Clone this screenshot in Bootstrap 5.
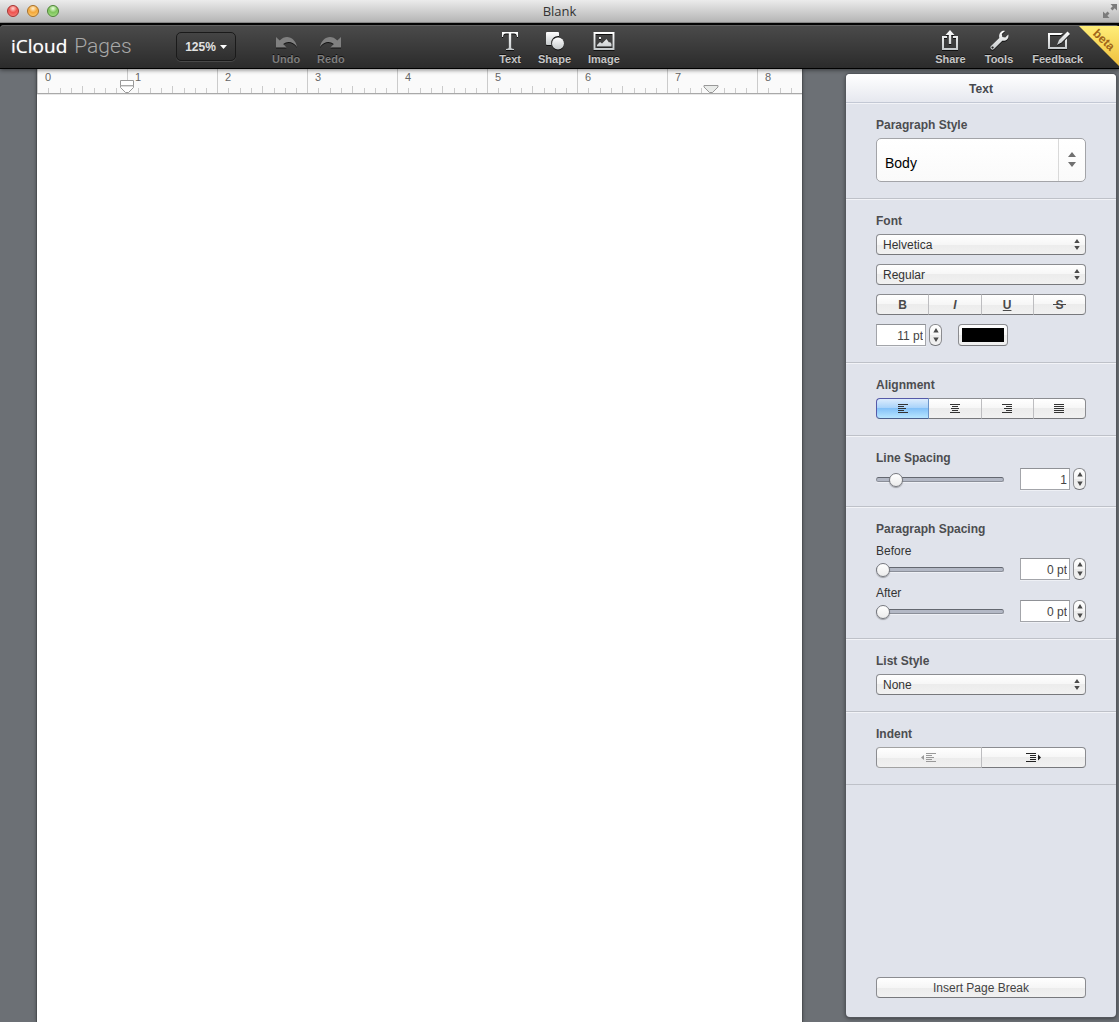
<!DOCTYPE html>
<html lang="en">
<head>
<meta charset="utf-8">
<meta name="viewport" content="width=device-width, initial-scale=1">
<title>Blank</title>
<link rel="stylesheet" href="https://cdn.jsdelivr.net/npm/bootstrap@5.3.0/dist/css/bootstrap.min.css">
<style>
:root { --ui: "Liberation Sans", Arial, Helvetica, sans-serif; --edge: #8b8c90; }
body { font-family: var(--ui); font-size: 12px; line-height: 16px; color: #333; background: #6c7075; }
svg { display: block; }

/* window title bar */
.win-title { height: 25px; background: linear-gradient(#ececec, #b2b2b2); border-bottom: 2px solid #050505; padding-bottom: 2px; font-family: "Open Sans", "Noto Sans", sans-serif; font-size: 13px; color: #333; box-shadow: inset 0 -1px #8c8c8c; }
.win-side { flex: 1 1 0; min-width: 0; }
.win-dots { padding-left: 7px; }
.win-full { margin-right: 2px; }
.dot { width: 12px; height: 12px; border-radius: 50%; border: 1px solid; padding: 0; }
.dot-red { background: radial-gradient(circle at 50% 25%, #ffd5d0 0, #ee5450 45%, #f4716c 75%, #ffa59b); border-color: #a53230; }
.dot-amber { background: radial-gradient(circle at 50% 25%, #fff0d0 0, #f3a83c 45%, #fbc05e 75%, #ffe28f); border-color: #a97026; }
.dot-green { background: radial-gradient(circle at 50% 25%, #ecffdf 0, #7fc45c 45%, #98d877 75%, #c9f7a2); border-color: #4e8438; }

/* toolbar */
.tools { height: 44px; background: linear-gradient(#4b4b4b, #2b2b2b); border-bottom: 1px solid #000; border-radius: 4px 4px 0 0; box-shadow: inset 0 1px #626262, 0 1px 4px rgba(0,0,0,.5); position: relative; z-index: 2; }
.tools-wrap { background: #000; }
.tool-side { flex: 1 1 0; min-width: 0; }
.brand { font-family: "Open Sans", "Noto Sans", sans-serif; font-size: 19px; line-height: 24px; color: #fff; width: 176px; padding: 0 0 2px 11px; text-decoration: none; white-space: nowrap; text-shadow: 0 0 1px rgba(255,255,255,.6); }
.brand-thin { font-family: Roboto, "Liberation Sans", sans-serif; font-weight: 300; font-size: 21px; color: #a8a8a8; margin-left: 7px; text-shadow: none; }
.zoom-btn { width: 60px; height: 29px; padding: 0; border: 1px solid #1a1a1a; border-radius: 5px; background: linear-gradient(#454545, #2e2e2e); color: #e2e2e2; font-weight: bold; font-size: 12px; line-height: 16px; gap: 4px; box-shadow: 0 1px rgba(255,255,255,.12); margin-right: 36px; }
.zoom-btn:hover { background: #3c3c3c; color: #fff; }
.tool-set { gap: 17px; }
.tool-btn { border: 0; background: none; padding: 0; color: #c6c6c6; font-weight: bold; font-size: 11px; line-height: 14px; text-shadow: 0 -1px #111; align-self: flex-start; }
.tool-btn svg { height: 22px; margin: 4px auto 1px; filter: drop-shadow(0 1px 0 #111); }
.tool-btn:disabled { color: #7d7d7d; }
.tools-end { gap: 19px; margin-right: 36px; }
.ribbon { position: absolute; top: 1px; right: 0; overflow: visible; }

/* document */
.work { min-height: 0; }
.canvas { padding: 0 44px 0 37px; min-width: 0; }
.sheet { background: #fff; box-shadow: 0 0 0 1px #4c4f53, 0 0 4px rgba(0,0,0,.5); }
.ruler { height: 26px; background: #fafafa; border-bottom: 1px solid #e8e8e8; box-shadow: inset 0 -1px #a9a9a9; overflow: hidden; position: relative; }
.inch { flex: 0 0 90px; height: 25px; position: relative; }
.inch-no { position: absolute; left: 8px; top: 1px; font-size: 11px; line-height: 14px; color: #666; }
.marker { position: absolute; bottom: 0; }
.marker-left { left: 82px; }
.marker-right { left: 666px; }

/* inspector */
.inspector { width: 270px; margin: 5px 3px 5px 0; border-radius: 4px; background: #e0e3eb; box-shadow: 0 0 0 1px #55585d, 0 1px 4px rgba(0,0,0,.6); }
.insp-head { height: 29px; border-bottom: 1px solid #c3c8d4; background: linear-gradient(#fff, #e6e8ef); border-radius: 4px 4px 0 0; font-size: 12px; line-height: 30px; font-weight: bold; color: #46484e; text-align: center; margin: 0; }
.sect { padding: 14px 30px 16px; border-bottom: 1px solid #bec1c8; box-shadow: inset 0 1px #f2f3f7; }
.sect-name { display: block; font-size: 12px; line-height: 16px; font-weight: bold; color: #4c4d50; margin: 0 0 5px; }
.sect-tight { margin-bottom: 2px; }
.sub-name { display: block; line-height: 16px; margin: 6px 0 -1px; }
.sub-next { margin-top: 5px; }
.stack { display: grid; gap: 9px; }
.face { border: 1px solid var(--edge); border-bottom-color: #77787c; border-radius: 4px; background-color: #f4f4f4; background-image: linear-gradient(#fff, #f6f6f6 50%, #ececec 50%, #f1f1f1); color: #333; }
.pick { position: relative; }
.pick .form-select { height: 21px; padding: 1px 20px 0 6px; font-size: 12px; line-height: 18px; border: 1px solid var(--edge); border-bottom-color: #77787c; border-radius: 4px; background: linear-gradient(#fff, #f6f6f6 50%, #ececec 50%, #f1f1f1); color: #333; }
.pick svg { position: absolute; right: 6px; top: 5px; pointer-events: none; }
.pick-big .form-select { height: 44px; padding: 6px 36px 0 8px; font-size: 14px; line-height: 36px; background: linear-gradient(#fff, #fafafa); color: #000; border-color: #a3a4a8; border-radius: 5px; }
.pick-big svg { right: 0; top: 1px; }
.seg .btn { flex: 1 1 0; height: 21px; padding: 1px 0 0; font-size: 12px; line-height: 18px; font-weight: bold; color: #4a4a4a; border-radius: 4px; border-left-color: #bdbdc0; }
.seg .btn:first-child { border-left-color: var(--edge); }
.seg .btn:not(:last-child) { border-right-color: #bdbdc0; }
.seg .btn svg { margin: 0 auto; }
.seg-icons .btn { padding: 0; }
.seg .btn.active { color: #333; background: linear-gradient(#dcecfd, #a5d1fa 50%, #84c1f8 50%, #b8e6ff); border-color: #5559a8 #6a93c8 #4a5f8c #5559a8; }
.seg .btn:disabled { opacity: 1; color: #a2a2a2; }
.num { width: 50px; height: 22px; padding: 1px 2px 0; border: 1px solid #a3a5aa; border-top-color: #8f9196; border-radius: 0; background: #fff; text-align: right; font-size: 12px; color: #444; box-shadow: 0 1px #eef0f5; }
.step { width: 13px; height: 22px; padding: 0; border-radius: 6px; margin-left: 3px; }
.step svg { margin: 0 auto; }
.swatch { width: 50px; height: 22px; padding: 3px; margin-left: 16px; }
.swatch::-webkit-color-swatch-wrapper { padding: 0; }
.swatch::-webkit-color-swatch { border: 0; border-radius: 0; }
.slide { -webkit-appearance: none; appearance: none; flex: 1 1 0; min-width: 0; height: 22px; margin: 0 16px 0 0; background: none; }
.slide::-webkit-slider-runnable-track { height: 5px; border-radius: 3px; border: 1px solid #8b8f99; border-top-color: #646870; background: #b3b8c5; box-shadow: 0 1px #eef0f5; }
.slide::-webkit-slider-thumb { -webkit-appearance: none; width: 14px; height: 14px; margin: -5px 0 0 -1px; border-radius: 50%; border: 1px solid #77797f; background: linear-gradient(#fff, #ececec); box-shadow: 0 1px 1px rgba(0,0,0,.3); }
.insp-foot { padding: 0 30px 19px; }
.wide-btn { height: 21px; padding: 1px 0 0; font-size: 12px; line-height: 18px; color: #444; }
</style>
</head>
<body class="vh-100 d-flex flex-column overflow-hidden">

<svg width="0" height="0" class="position-absolute" aria-hidden="true">
  <defs>
    <linearGradient id="silver" x1="0" y1="0" x2="0" y2="1"><stop offset="0" stop-color="#fff"/><stop offset="1" stop-color="#c4c8ca"/></linearGradient>
    <symbol id="ticks" viewBox="0 0 90 25"><path fill="#cbcbcb" d="M0 0h1v24H0zM11 19h1v5h-1zM23 19h1v5h-1zM34 19h1v5h-1zM45 17h1v7h-1zM57 19h1v5h-1zM68 19h1v5h-1zM79 19h1v5h-1z"/></symbol>
    <symbol id="updown" viewBox="0 0 6 11"><path fill="#4a4a4a" d="M3 0 5.700 4H.3zM3 11 .3 7h5.400z"/></symbol>
    <symbol id="nudge" viewBox="0 0 6 14"><path fill="#4a4a4a" d="M3 0 5.700 4.500H.3zM3 14 .3 9.500h5.400z"/></symbol>
  </defs>
</svg>

<header class="win-title d-flex align-items-center flex-shrink-0">
  <div class="win-side d-flex">
    <div class="win-dots d-flex gap-2">
      <button class="dot dot-red" aria-label="Close"></button>
      <button class="dot dot-amber" aria-label="Minimise"></button>
      <button class="dot dot-green" aria-label="Zoom"></button>
    </div>
  </div>
  <div>Blank</div>
  <div class="win-side d-flex justify-content-end">
    <svg class="win-full" width="14" height="14" viewBox="0 0 14 14" fill="#7b7b7b"><path d="M7.500 0H14v6.500l-2.300-2.200-2.200 2.200-2-2 2.200-2.200zM0 14V7.500l2.300 2.200 2.200-2.200 2 2-2.200 2.200L6.500 14z"/></svg>
  </div>
</header>

<div class="tools-wrap flex-shrink-0">
<nav class="tools d-flex" aria-label="Toolbar">
  <div class="tool-side d-flex align-items-center">
    <a class="brand" href="#">iCloud<span class="brand-thin">Pages</span></a>
    <button class="btn zoom-btn d-flex align-items-center justify-content-center">125%
      <svg width="7" height="4" viewBox="0 0 7 4"><path d="M0 0h7L3.500 4z" fill="#fff"/></svg>
    </button>
    <div class="d-flex tool-set align-self-start">
      <button class="tool-btn" disabled><svg width="24" height="22" viewBox="0 0 24 22"><path fill="#808080" d="M2 8v10.500h10.500L9.200 15c4.300-3.500 10-2.500 13.800 3C21.500 9 12.500 4.500 5.700 11.500z"/></svg>Undo</button>
      <button class="tool-btn" disabled><svg width="24" height="22" viewBox="0 0 24 22"><path fill="#808080" d="M22 8v10.500H11.500l3.300-3.500c-4.300-3.500-10-2.500-13.800 3C2.500 9 11.500 4.500 18.300 11.500z"/></svg>Redo</button>
    </div>
  </div>
  <div class="d-flex tool-set">
    <button class="tool-btn"><svg width="18" height="22" viewBox="0 0 18 22"><path fill="url(#silver)" d="M1 3h16v5h-1c-.4-2.500-1-3.400-3-3.400h-2.800V18c0 1.400.6 1.900 2.800 2v1H5v-1c2.200-.1 2.800-.6 2.800-2V4.600H5C3 4.600 2.400 5.500 2 8H1z"/></svg>Text</button>
    <button class="tool-btn"><svg width="20" height="22" viewBox="0 0 20 22"><path fill="url(#silver)" d="M2 3h11a1 1 0 0 1 1 1v3A7.200 7.200 0 0 0 6.300 16H2a1 1 0 0 1-1-1V4a1 1 0 0 1 1-1z"/><circle cx="13" cy="14.500" r="6" fill="url(#silver)"/></svg>Shape</button>
    <button class="tool-btn"><svg width="22" height="22" viewBox="0 0 22 22"><path fill="url(#silver)" fill-rule="evenodd" d="M.5 3h21v18H.5zM2.500 5v14h17V5zM4 17.500V16l3-3 2 1.500L13.500 10l2.500 3.500 1-.5 1.500 2v2.500zM6 8h2v2H6z"/></svg>Image</button>
  </div>
  <div class="tool-side d-flex justify-content-end">
    <div class="tools-end d-flex">
    <button class="tool-btn"><svg width="18" height="22" viewBox="0 0 18 22"><path fill="url(#silver)" d="M9 1l4.500 5h-3.300v9H7.800V6H4.500zM1 7h5v2H3v10h12V9h-3V7h5v14H1z"/></svg>Share</button>
    <button class="tool-btn"><svg width="20" height="22" viewBox="0 0 20 22"><path fill="url(#silver)" fill-rule="evenodd" d="M16 2 12.800 5.100l.5 3 3 .5L19.300 5.500c1 4-2 7-6 6.200L5 20c-2 2-5-.8-3-3l8.300-8C9.300 5 12.300 1 16 2zM3.500 17.500a1 1 0 1 0 .1 0z"/></svg>Tools</button>
    <button class="tool-btn"><svg width="24" height="22" viewBox="0 0 24 22"><path fill="url(#silver)" d="M2 4h15l-2 2H4v12h15v-6.500l2-2V20H2z"/><path fill="url(#silver)" d="M21.500 2.500 24 5 15.500 13.500 11 16 13 11z"/></svg>Feedback</button>
    </div>
  </div>
  <svg class="ribbon" width="40" height="40" viewBox="0 0 40 40"><defs><linearGradient id="gold" x1="0" y1="0" x2="0" y2="1"><stop offset="0" stop-color="#ffee78"/><stop offset="1" stop-color="#efbf3c"/></linearGradient></defs><path fill="url(#gold)" d="M0 0h40v40z"/><text x="25" y="18" transform="rotate(44 25 14)" text-anchor="middle" font-family="Liberation Sans, Arial, sans-serif" font-size="12" font-weight="bold" fill="#a0651a">beta</text></svg>
</nav>
</div>

<div class="work d-flex flex-grow-1">
  <main class="canvas flex-grow-1 d-flex">
    <div class="sheet flex-grow-1 overflow-hidden">
      <div class="ruler d-flex">
        <div class="inch"><svg width="90" height="25"><use href="#ticks"/></svg><span class="inch-no">0</span></div>
        <div class="inch"><svg width="90" height="25"><use href="#ticks"/></svg><span class="inch-no">1</span></div>
        <div class="inch"><svg width="90" height="25"><use href="#ticks"/></svg><span class="inch-no">2</span></div>
        <div class="inch"><svg width="90" height="25"><use href="#ticks"/></svg><span class="inch-no">3</span></div>
        <div class="inch"><svg width="90" height="25"><use href="#ticks"/></svg><span class="inch-no">4</span></div>
        <div class="inch"><svg width="90" height="25"><use href="#ticks"/></svg><span class="inch-no">5</span></div>
        <div class="inch"><svg width="90" height="25"><use href="#ticks"/></svg><span class="inch-no">6</span></div>
        <div class="inch"><svg width="90" height="25"><use href="#ticks"/></svg><span class="inch-no">7</span></div>
        <div class="inch"><svg width="90" height="25"><use href="#ticks"/></svg><span class="inch-no">8</span></div>
        <svg class="marker marker-left" width="16" height="14" viewBox="0 0 16 14"><path fill="#fff" stroke="#999" d="M1.500.5h13v7L9.500 12.500h-3L1.500 7.500z"/><path fill="#ddd" d="M2 5h12v2H2z"/><path stroke="#aaa" d="M1.500 5.500h13"/></svg>
        <svg class="marker marker-right" width="16" height="9" viewBox="0 0 16 9"><path fill="#e9ebe9" stroke="#999" d="M1 .5h14v1.500L9.500 7.500h-3L1 2z"/></svg>
      </div>
    </div>
  </main>

  <aside class="inspector d-flex flex-column flex-shrink-0">
    <h2 class="insp-head">Text</h2>

    <section class="sect">
      <label class="sect-name" for="pstyle">Paragraph Style</label>
      <div class="pick pick-big"><select class="form-select" id="pstyle"><option>Body</option></select>
        <svg width="28" height="42" viewBox="0 0 28 42"><path d="M.5 0v42" stroke="#d9d9d9"/><path fill="#707070" d="M14 13l4 5h-8zM14 28l4-5h-8z"/></svg></div>
    </section>

    <section class="sect">
      <label class="sect-name" for="family">Font</label>
      <div class="stack">
        <div class="pick"><select class="form-select" id="family"><option>Helvetica</option></select><svg width="6" height="11"><use href="#updown"/></svg></div>
        <div class="pick"><select class="form-select" aria-label="Typeface"><option>Regular</option></select><svg width="6" height="11"><use href="#updown"/></svg></div>
        <div class="seg btn-group d-flex" role="group" aria-label="Text style">
          <button class="btn face">B</button>
          <button class="btn face fst-italic">I</button>
          <button class="btn face text-decoration-underline">U</button>
          <button class="btn face"><svg width="13" height="18" viewBox="0 0 13 18"><text x="6.500" y="13" text-anchor="middle" font-size="12" fill="#4a4a4a">S</text><path d="M0 8.500h13" stroke="#4a4a4a"/></svg></button>
        </div>
        <div class="d-flex">
          <input class="num" type="text" value="11 pt" aria-label="Font size">
          <button class="step face" aria-label="Change font size"><svg width="6" height="14"><use href="#nudge"/></svg></button>
          <input class="swatch face" type="color" value="#000000" aria-label="Text colour">
        </div>
      </div>
    </section>

    <section class="sect">
      <span class="sect-name">Alignment</span>
      <div class="seg seg-icons btn-group d-flex" role="group" aria-label="Alignment">
        <button class="btn face active" aria-label="Left"><svg width="10" height="9" viewBox="0 0 10 9"><path stroke="#333" d="M0 .5h10M0 2.500h6M0 4.500h8M0 6.500h6M0 8.500h10"/></svg></button>
        <button class="btn face" aria-label="Centre"><svg width="10" height="9" viewBox="0 0 10 9"><path stroke="#333" d="M0 .5h10M2 2.500h6M1 4.500h8M2 6.500h6M0 8.500h10"/></svg></button>
        <button class="btn face" aria-label="Right"><svg width="10" height="9" viewBox="0 0 10 9"><path stroke="#333" d="M0 .5h10M4 2.500h6M2 4.500h8M4 6.500h6M0 8.500h10"/></svg></button>
        <button class="btn face" aria-label="Justify"><svg width="10" height="9" viewBox="0 0 10 9"><path stroke="#333" d="M0 .5h10M0 2.500h10M0 4.500h10M0 6.500h10M0 8.500h10"/></svg></button>
      </div>
    </section>

    <section class="sect">
      <label class="sect-name sect-tight" for="line">Line Spacing</label>
      <div class="d-flex">
        <input class="slide" type="range" id="line" min="0" max="100" value="12">
        <input class="num" type="text" value="1" aria-label="Line spacing value">
        <button class="step face" aria-label="Change line spacing"><svg width="6" height="14"><use href="#nudge"/></svg></button>
      </div>
    </section>

    <section class="sect">
      <span class="sect-name mb-0">Paragraph Spacing</span>
      <label class="sub-name" for="before">Before</label>
      <div class="d-flex">
        <input class="slide" type="range" id="before" min="0" max="100" value="0">
        <input class="num" type="text" value="0 pt" aria-label="Space before">
        <button class="step face" aria-label="Change space before"><svg width="6" height="14"><use href="#nudge"/></svg></button>
      </div>
      <label class="sub-name sub-next" for="after">After</label>
      <div class="d-flex">
        <input class="slide" type="range" id="after" min="0" max="100" value="0">
        <input class="num" type="text" value="0 pt" aria-label="Space after">
        <button class="step face" aria-label="Change space after"><svg width="6" height="14"><use href="#nudge"/></svg></button>
      </div>
    </section>

    <section class="sect">
      <label class="sect-name" for="list">List Style</label>
      <div class="pick"><select class="form-select" id="list"><option>None</option></select><svg width="6" height="11"><use href="#updown"/></svg></div>
    </section>

    <section class="sect">
      <span class="sect-name">Indent</span>
      <div class="seg seg-icons btn-group d-flex" role="group" aria-label="Indent">
        <button class="btn face" disabled aria-label="Decrease indent"><svg width="15" height="9" viewBox="0 0 15 9"><path stroke="#999" d="M5 .5h10M5 2.500h6M5 4.500h8M5 6.500h6M5 8.500h10"/><path fill="#999" d="M0 4.500 3 2v5z"/></svg></button>
        <button class="btn face" aria-label="Increase indent"><svg width="15" height="9" viewBox="0 0 15 9"><path stroke="#222" d="M0 .5h10M4 2.500h6M4 4.500h6M4 6.500h6M0 8.500h10"/><path fill="#222" d="M15 4.500 12 1.500v6z"/></svg></button>
      </div>
    </section>

    <div class="insp-foot mt-auto"><button class="btn face wide-btn w-100 d-block">Insert Page Break</button></div>
  </aside>
</div>

<script src="https://cdn.jsdelivr.net/npm/bootstrap@5.3.0/dist/js/bootstrap.bundle.min.js"></script>
</body>
</html>
